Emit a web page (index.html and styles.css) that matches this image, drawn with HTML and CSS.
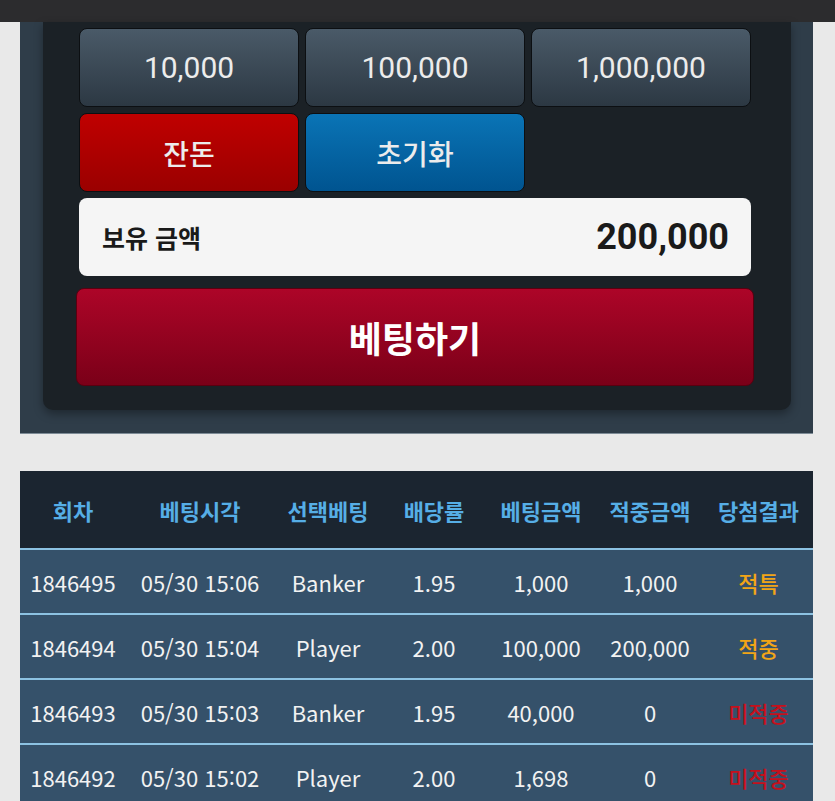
FILE: index.html
```html
<!DOCTYPE html>
<html lang="ko">
<head>
  <meta charset="UTF-8" />
  <meta name="viewport" content="width=device-width, initial-scale=1.0" />
  <title>베팅</title>
  <link rel="stylesheet" href="styles.css">
</head>
<body>
  <div class="topbar"></div>

  <section class="bet-area">
    <div class="bet-panel">
      <div class="chips">
        <button class="chip">10,000</button>
        <button class="chip">100,000</button>
        <button class="chip">1,000,000</button>
        <button class="chip chip-red">잔돈</button>
        <button class="chip chip-blue">초기화</button>
      </div>
      <div class="balance">
        <span class="balance-label">보유 금액</span>
        <span class="balance-value">200,000</span>
      </div>
      <button class="bet-btn">베팅하기</button>
    </div>
  </section>

  <table class="history">
    <colgroup>
      <col style="width:106px"><col style="width:148px"><col style="width:108px">
      <col style="width:104px"><col style="width:110px"><col style="width:108px"><col style="width:109px">
    </colgroup>
    <thead>
      <tr>
        <th>회차</th><th>베팅시각</th><th>선택베팅</th><th>배당률</th>
        <th>베팅금액</th><th>적중금액</th><th>당첨결과</th>
      </tr>
    </thead>
    <tbody>
      <tr>
        <td>1846495</td><td>05/30 15:06</td><td>Banker</td><td>1.95</td>
        <td>1,000</td><td>1,000</td><td class="win">적특</td>
      </tr>
      <tr>
        <td>1846494</td><td>05/30 15:04</td><td>Player</td><td>2.00</td>
        <td>100,000</td><td>200,000</td><td class="win">적중</td>
      </tr>
      <tr>
        <td>1846493</td><td>05/30 15:03</td><td>Banker</td><td>1.95</td>
        <td>40,000</td><td>0</td><td class="lose">미적중</td>
      </tr>
      <tr>
        <td>1846492</td><td>05/30 15:02</td><td>Player</td><td>2.00</td>
        <td>1,698</td><td>0</td><td class="lose">미적중</td>
      </tr>
    </tbody>
  </table>
</body>
</html>
```

FILE: styles.css
```css
body {
  margin: 0;
  background: #e9e9e9;
  font-family: Roboto, "Noto Sans CJK KR", sans-serif;
  color: #eee;
}
.topbar {
  height: 22px;
  background: #2c2c2e;
}
.bet-area {
  margin: 0 22px 0 20px;
  padding: 0 22px 23px 23px;
  background: #2f3d49;
  border-bottom: 1px solid #7d8b96;
}
.bet-panel {
  background: #1b2126;
  border-radius: 0 0 10px 10px;
  padding: 6px 40px 24px 36px;
  box-shadow: 0 4px 10px rgba(0, 0, 0, 0.35);
}
.chips {
  display: grid;
  grid-template-columns: repeat(3, 1fr);
  grid-auto-rows: 79px;
  gap: 6px;
}
.chip {
  font-family: Roboto, "Noto Sans CJK KR", sans-serif;
  font-size: 30px;
  color: #ececec;
  border: 1px solid #0c0f12;
  border-radius: 8px;
  background: linear-gradient(#4a5a68, #2c3843);
  cursor: pointer;
}
.chip-red,
.chip-blue {
  font-family: "Noto Sans CJK KR", sans-serif;
  font-size: 28px;
  font-weight: 500;
}
.chip-red {
  background: linear-gradient(#c00000, #9a0000);
}
.chip-blue {
  background: linear-gradient(#0a74b6, #005490);
}
.balance {
  margin-top: 6px;
  height: 78px;
  background: #f5f5f5;
  border-radius: 8px;
  display: flex;
  align-items: center;
  justify-content: space-between;
  padding: 0 22px 0 23px;
  color: #1a1a1a;
}
.balance-label {
  font-family: "Noto Sans CJK KR", sans-serif;
  font-size: 25px;
  font-weight: bold;
}
.balance-value {
  font-size: 36px;
  font-weight: bold;
}
.bet-btn {
  display: block;
  width: calc(100% + 6px);
  margin: 12px -3px 0;
  height: 98px;
  border: 1px solid #5a0010;
  border-radius: 8px;
  background: linear-gradient(#ad0528, #7a0018);
  color: white;
  font-family: "Noto Sans CJK KR", sans-serif;
  font-size: 36px;
  font-weight: bold;
  cursor: pointer;
}
.history {
  margin: 37px 22px 0 20px;
  width: 793px;
  border-collapse: collapse;
  table-layout: fixed;
  font-family: "Noto Sans CJK KR", sans-serif;
}
.history th {
  height: 77px;
  padding: 0;
  background: #1b2530;
  color: #56aee6;
  font-size: 22px;
  font-weight: bold;
  border-bottom: 2px solid #8cc2e2;
}
.history td {
  height: 63px;
  padding: 0;
  background: #35516a;
  color: #f2f2f2;
  font-size: 22px;
  text-align: center;
  border-bottom: 2px solid #8cc2e2;
}
.history .win {
  color: #f2a516;
  font-weight: 500;
}
.history .lose {
  color: #c4101c;
  font-weight: 500;
}
```
